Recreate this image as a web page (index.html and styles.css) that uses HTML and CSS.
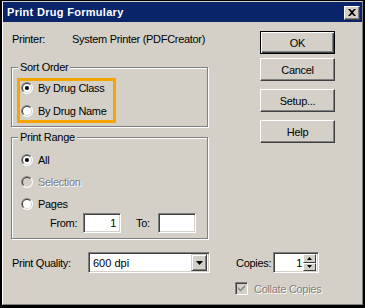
FILE: index.html
```html
<!DOCTYPE html>
<html lang="en">
<head>
  <meta charset="UTF-8">
  <title>Print Drug Formulary</title>
  <link rel="stylesheet" href="styles.css">
</head>
<body>
  <svg class="defs" width="0" height="0" aria-hidden="true">
    <defs>
      <symbol id="radio-ring" viewBox="0 0 12 12">
        <circle cx="6" cy="6" r="6" fill="#fff"/>
        <path d="M1.757 10.243 A6 6 0 0 1 10.243 1.757 Z" fill="#808080"/>
        <circle cx="6" cy="6" r="5" fill="#d4d0c8"/>
        <path d="M2.464 9.536 A5 5 0 0 1 9.536 2.464 Z" fill="#404040"/>
      </symbol>
    </defs>
  </svg>

  <div class="window">
    <div class="frame">
      <div class="titlebar">
        <span class="title">Print Drug Formulary</span>
        <span class="close-btn">
          <svg width="8" height="7" viewBox="0 0 8 7"><path d="M0 0h2l2 2 2-2h2L5 3.5 8 7H6L4 5 2 7H0l3-3.5z" fill="#000"/></svg>
        </span>
      </div>

      <div class="dialog">
        <div class="main">
          <div class="left">
            <div class="printer-row">
              <span class="printer-label">Printer:</span>
              <span>System Printer (PDFCreator)</span>
            </div>

            <div class="group sort-group">
              <span class="legend">Sort Order</span>
              <div class="highlight">
                <div class="radio">
                  <svg class="radio-icon" width="12" height="12"><use href="#radio-ring"/><circle cx="6" cy="6" r="4" fill="#fff"/><circle cx="6" cy="6" r="2" fill="#000"/></svg>
                  <span>By Drug Class</span>
                </div>
                <div class="radio">
                  <svg class="radio-icon" width="12" height="12"><use href="#radio-ring"/><circle cx="6" cy="6" r="4" fill="#fff"/></svg>
                  <span>By Drug Name</span>
                </div>
              </div>
            </div>

            <div class="group range-group">
              <span class="legend">Print Range</span>
              <div class="radio">
                <svg class="radio-icon" width="12" height="12"><use href="#radio-ring"/><circle cx="6" cy="6" r="4" fill="#fff"/><circle cx="6" cy="6" r="2" fill="#000"/></svg>
                <span>All</span>
              </div>
              <div class="radio disabled">
                <svg class="radio-icon" width="12" height="12"><use href="#radio-ring"/><circle cx="6" cy="6" r="4" fill="#d4d0c8"/></svg>
                <span>Selection</span>
              </div>
              <div class="radio">
                <svg class="radio-icon" width="12" height="12"><use href="#radio-ring"/><circle cx="6" cy="6" r="4" fill="#fff"/></svg>
                <span>Pages</span>
              </div>
              <div class="pages-row">
                <span class="from-label">From:</span>
                <span class="field page-field">1</span>
                <span class="to-label">To:</span>
                <span class="field page-field"></span>
              </div>
            </div>
          </div>

          <div class="buttons">
            <div class="btn btn-default">OK</div>
            <div class="btn">Cancel</div>
            <div class="btn btn-gap">Setup...</div>
            <div class="btn btn-gap">Help</div>
          </div>
        </div>

        <div class="quality-row">
          <span class="quality-label">Print Quality:</span>
          <div class="field select">
            <span class="select-value">600 dpi</span>
            <span class="drop-btn">
              <svg width="7" height="4" viewBox="0 0 7 4"><path d="M0 0h7L3.5 4z" fill="#000"/></svg>
            </span>
          </div>
          <span class="copies-label">Copies:</span>
          <div class="field spin">
            <span class="spin-value">1</span>
            <span class="spin-btns">
              <span class="spin-btn"><svg width="5" height="3" viewBox="0 0 5 3"><path d="M2.5 0L5 3H0z" fill="#000"/></svg></span>
              <span class="spin-btn"><svg width="5" height="3" viewBox="0 0 5 3"><path d="M0 0h5L2.5 3z" fill="#000"/></svg></span>
            </span>
          </div>
        </div>

        <div class="collate-row">
          <span class="checkbox">
            <svg width="7" height="7" viewBox="0 0 7 7"><path d="M0 2l2.5 2.5L7 0v2L2.5 6.5 0 4z" fill="#808080"/></svg>
          </span>
          <span class="collate-text">Collate Copies</span>
        </div>
      </div>
    </div>
  </div>
</body>
</html>
```

FILE: styles.css
```css
* {
  margin: 0;
  padding: 0;
  box-sizing: border-box;
}

html, body {
  width: 365px;
  height: 308px;
  overflow: hidden;
}

body {
  font-family: 'Liberation Sans', Arial, sans-serif;
  font-size: 11px;
  letter-spacing: -0.3px;
  color: #000;
  background: #000;
}

.defs {
  position: absolute;
}

/* Window chrome */
.window {
  width: 365px;
  height: 308px;
  border-style: solid;
  border-color: #000;
  border-width: 1px 2px 3px 2px;
}

.frame {
  height: 100%;
  background: #d4d0c8;
  border: 1px solid;
  border-color: #d4d0c8 #808080 #808080 #fff;
}

.titlebar {
  height: 20px;
  background: #0a246a;
  display: flex;
  align-items: center;
  justify-content: space-between;
  padding: 0 2px 0 4px;
}

.title {
  color: #fff;
  font-weight: bold;
  letter-spacing: 0.3px;
  line-height: 14px;
}

.close-btn {
  width: 16px;
  height: 14px;
  margin-top: 1px;
  display: flex;
  align-items: center;
  justify-content: center;
  background: #d4d0c8;
  border: 1px solid;
  border-color: #fff #404040 #404040 #fff;
  box-shadow: inset -1px -1px 0 #808080;
}

/* Dialog body */
.dialog {
  padding-left: 8px;
}

.main {
  display: flex;
  align-items: flex-start;
}

.left {
  width: 198px;
  padding-top: 10px;
}

.printer-row {
  display: flex;
  height: 14px;
  line-height: 14px;
  padding-left: 1px;
}

.printer-label {
  width: 60px;
}

.group {
  position: relative;
  width: 197px;
  border: 1px solid #808080;
  box-shadow: 1px 1px 0 #fff, inset 1px 1px 0 #fff;
}

.legend {
  position: absolute;
  top: -7px;
  left: 6px;
  padding: 0 2px;
  line-height: 13px;
  background: #d4d0c8;
}

.sort-group {
  height: 60px;
  margin-top: 21px;
  padding: 10px 0 0 5px;
}

.highlight {
  width: 99px;
  height: 45px;
  border: 3px solid #f5a500;
  padding: 0 0 0 1px;
  display: flex;
  flex-direction: column;
  gap: 9px;
}

.radio {
  display: flex;
  align-items: center;
  gap: 5px;
  height: 14px;
  line-height: 14px;
}

.radio.disabled span {
  color: #808080;
  text-shadow: 1px 1px 0 #fff;
}

.range-group {
  height: 102px;
  margin-top: 10px;
  padding: 15px 0 0 9px;
  display: flex;
  flex-direction: column;
  gap: 8px;
}

.pages-row {
  display: flex;
  align-items: center;
  margin-top: -6px;
  padding-left: 29px;
}

.from-label {
  width: 33px;
}

.to-label {
  margin-left: 15px;
  width: 22px;
}

.field {
  background: #fff;
  border: 1px solid;
  border-color: #808080 #fff #fff #808080;
  box-shadow: inset 1px 1px 0 #404040, inset -1px -1px 0 #d4d0c8;
}

.page-field {
  display: block;
  width: 38px;
  height: 20px;
  line-height: 18px;
  text-align: right;
  padding-right: 4px;
}

/* Buttons */
.buttons {
  margin-left: 51px;
  padding-top: 9px;
  display: flex;
  flex-direction: column;
  gap: 4px;
}

.btn {
  width: 75px;
  height: 23px;
  display: flex;
  align-items: center;
  justify-content: center;
  background: #d4d0c8;
  border: 1px solid;
  border-color: #fff #404040 #404040 #fff;
  box-shadow: inset -1px -1px 0 #808080;
}

.btn-default {
  border-color: #000;
  box-shadow: inset 1px 1px 0 #fff, inset -1px -1px 0 #404040, inset -2px -2px 0 #808080;
}

.btn-gap {
  margin-top: 4px;
}

/* Bottom rows */
.quality-row {
  display: flex;
  align-items: center;
  margin-top: 13px;
  padding-left: 1px;
}

.quality-label {
  width: 76px;
}

.select {
  width: 122px;
  height: 21px;
  display: flex;
  align-items: center;
  justify-content: space-between;
  padding: 2px;
}

.select-value {
  padding-left: 2px;
  letter-spacing: 0;
}

.drop-btn {
  width: 16px;
  height: 17px;
  display: flex;
  align-items: center;
  justify-content: center;
  background: #d4d0c8;
  border: 1px solid;
  border-color: #d4d0c8 #404040 #404040 #d4d0c8;
  box-shadow: inset 1px 1px 0 #fff, inset -1px -1px 0 #808080;
}

.copies-label {
  margin-left: 26px;
  width: 37px;
}

.spin {
  width: 46px;
  height: 21px;
  display: flex;
  align-items: center;
  padding: 2px;
}

.spin-value {
  flex: 1;
  text-align: right;
  padding-right: 1px;
}

.spin-btns {
  display: flex;
  flex-direction: column;
  width: 13px;
  height: 17px;
}

.spin-btn {
  flex: 1;
  display: flex;
  align-items: center;
  justify-content: center;
  background: #d4d0c8;
  border: 1px solid;
  border-color: #fff #404040 #404040 #fff;
}

.collate-row {
  display: flex;
  align-items: center;
  margin-top: 9px;
  padding-left: 224px;
}

.checkbox {
  width: 13px;
  height: 13px;
  display: flex;
  align-items: center;
  justify-content: center;
  background: #d4d0c8;
  border: 1px solid;
  border-color: #808080 #fff #fff #808080;
  box-shadow: inset 1px 1px 0 #404040, inset -1px -1px 0 #d4d0c8;
}

.collate-text {
  margin-left: 6px;
  color: #808080;
  text-shadow: 1px 1px 0 #fff;
}
```
